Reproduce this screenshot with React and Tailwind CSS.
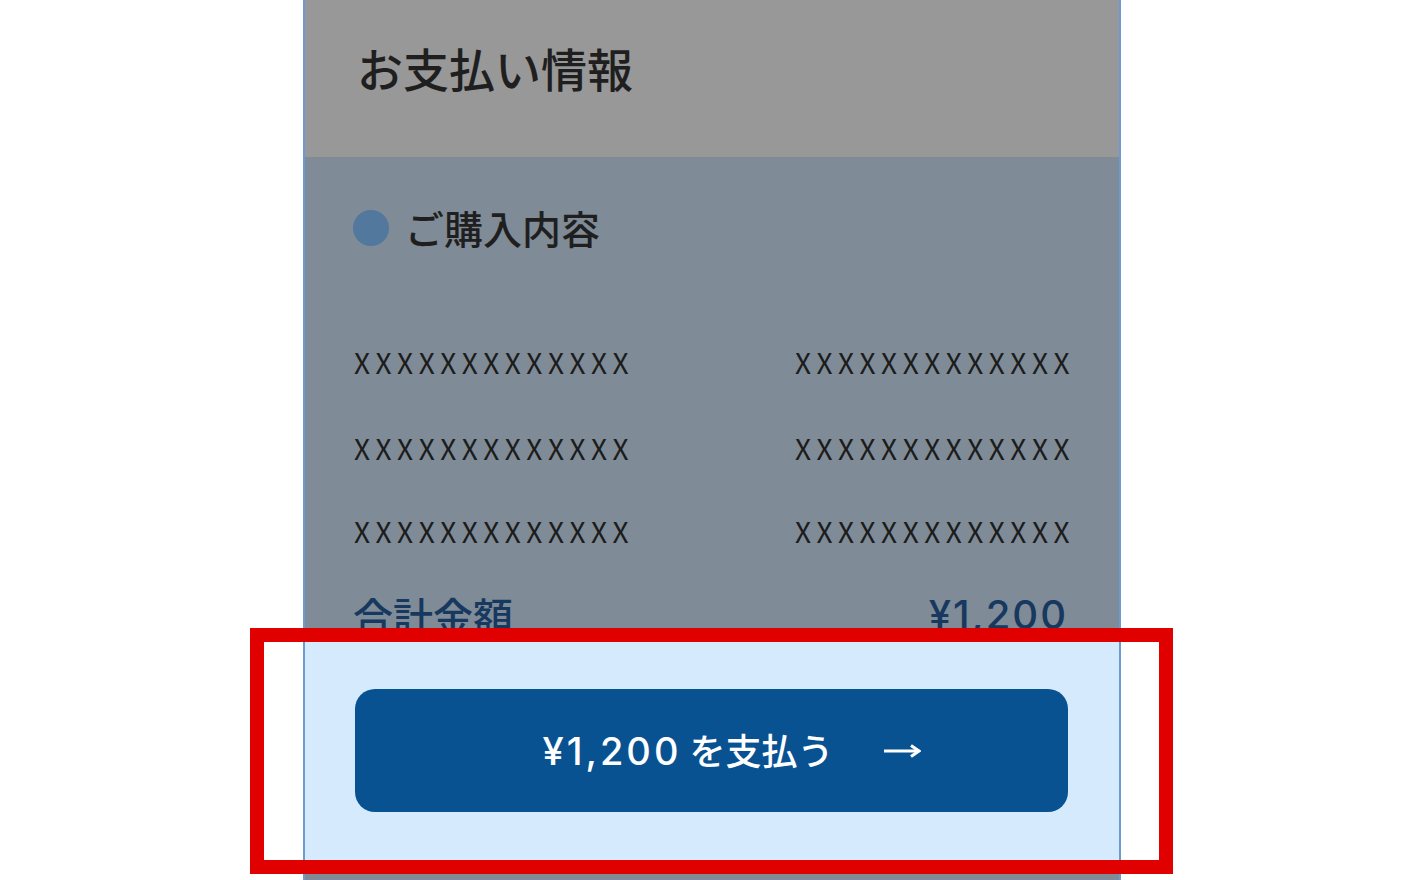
export default function App() {
  const rows = [0, 1, 2];
  const num = { fontFamily: 'Inter, "Noto Sans CJK JP", sans-serif' };
  return (
    <div
      className="relative h-[880px] w-full overflow-hidden bg-white"
      style={{ fontFamily: '"Noto Sans CJK JP", "Noto Sans", sans-serif' }}
    >
      <div className="mx-auto flex h-full w-[818px] flex-col border-x-2 border-[#6a9bd2] bg-[#7f8b96]">
        {/* header */}
        <div className="h-[157px] shrink-0 bg-[#989898] pl-[52px] pt-[44px]">
          <h1 className="text-[46px] font-medium leading-none text-[#1f1f1f]">お支払い情報</h1>
        </div>

        {/* order summary */}
        <div className="h-[484px] shrink-0 overflow-hidden pl-[48px] pr-[44px]">
          <div className="mt-[51px] flex items-center">
            <span className="h-[36px] w-[36px] rounded-full bg-[#52789d]" />
            <span className="ml-[16px] text-[39px] font-medium leading-none text-[#1f1f1f]">ご購入内容</span>
          </div>
          <div className="mt-[101px] flex flex-col">
            {rows.map((r) => (
              <div
                key={r}
                className="mb-[55px] flex justify-between pl-[1px] text-[28px] leading-none tracking-[5.5px] text-[#1c1c1c] first:mb-[58px]"
              >
                <span>XXXXXXXXXXXXX</span>
                <span>XXXXXXXXXXXXX</span>
              </div>
            ))}
          </div>
          <div className="-mt-[5px] flex justify-between pr-[7px] text-[40px] font-medium leading-none text-[#17385f]">
            <span>合計金額</span>
            <span style={num} className="tracking-[2px]">¥1,200</span>
          </div>
        </div>

        {/* pay button bar */}
        <div className="h-[227px] shrink-0 bg-[#d6eafd] pl-[50px] pr-[51px] pt-[48px]">
          <button className="flex h-[123px] w-full items-center justify-center rounded-[20px] bg-[#085292] pl-[40px] text-white">
            <span className="text-[36px] font-medium leading-none">
              <span style={num} className="text-[38px] tracking-[3px]">¥1,200</span> を支払う
            </span>
            <svg className="ml-[50px]" width="37" height="14" viewBox="0 0 37 14" fill="none">
              <path d="M0 7H34" stroke="white" strokeWidth="3" />
              <path d="M27 1.5L35 7L27 12.5" stroke="white" strokeWidth="3" fill="none" />
            </svg>
          </button>
        </div>
        <div className="flex-1" />
      </div>

      {/* highlight frame */}
      <div className="pointer-events-none absolute left-[250px] top-[628px] h-[246px] w-[923px] border-[14px] border-[#e10000]" />
    </div>
  );
}
